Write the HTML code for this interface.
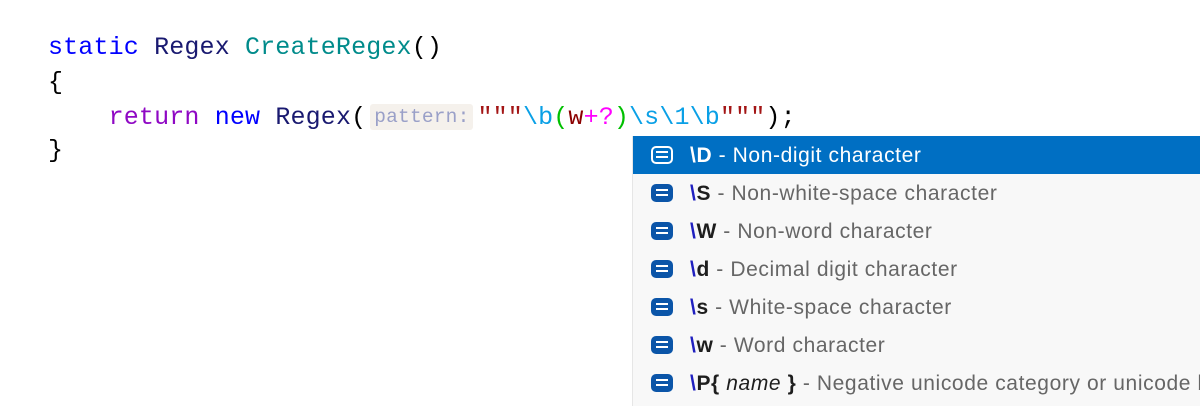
<!DOCTYPE html>
<html><head><style>
body{margin:0;width:1200px;height:400px;background:#fff;overflow:hidden;position:relative;font-family:"Liberation Mono",monospace}
.l{position:absolute;left:48px;font-size:25px;white-space:pre;line-height:34px;color:#000;letter-spacing:0.15px}
.kw{color:#0000ff}.ty{color:#191970}.fn{color:#008b8b}.rt{color:#8f08c4}
.q{color:#a31515}.re{color:#0aa0e6}.g{color:#00c000}.w{color:#8b0000}.m{color:#ff00ff}
.hint{display:inline-block;background:#f5f1ec;color:#9aa0c8;font-size:19.5px;border-radius:3px;padding:0 4px;margin:0 4px 0 4px;line-height:26px;vertical-align:2px;letter-spacing:0.2px}
.pop{position:absolute;left:632px;top:136px;width:570px;height:270px;background:#f8f8f8;border-left:1px solid #e6e6e6;font-family:"Liberation Sans",sans-serif;font-size:21px;letter-spacing:0.6px}
.r{height:38px;line-height:40px;position:relative;padding-left:57px;color:#666;white-space:nowrap}
.r b{color:#1e1e1e}.r .bs{color:#2020c0;font-weight:bold}
.r.sel{background:#006fc3;color:#fff}.r.sel b,.r.sel .bs{color:#fff}
.ic{position:absolute;left:18px;top:10px;width:22px;height:18px;background:#0b55a8;border-radius:5px;box-sizing:border-box}
.ic:before,.ic:after{content:"";position:absolute;left:5px;right:5px;height:2px;background:#fff}
.ic:before{top:5px}.ic:after{top:10px}
.sel .ic{background:#006fc3;border:2px solid #fff}
.sel .ic:before{top:3px;left:3px;right:3px}.sel .ic:after{top:8px;left:3px;right:3px}
</style></head><body>
<div class="l" style="top:31px"><span class="kw">static</span> <span class="ty">Regex</span> <span class="fn">CreateRegex</span>()</div>
<div class="l" style="top:66px">{</div>
<div class="l" style="top:101px">    <span class="rt">return</span> <span class="kw">new</span> <span class="ty">Regex</span>(<span class="hint">pattern:</span><span class="q">"""</span><span class="re">\b</span><span class="g">(</span><span class="w">w</span><span class="m">+?</span><span class="g">)</span><span class="re">\s\1\b</span><span class="q">"""</span>);</div>
<div class="l" style="top:134px">}</div>
<div class="pop">
<div class="r sel"><span class="ic"></span><span class="bs">\</span><b>D</b> - Non-digit character</div>
<div class="r"><span class="ic"></span><span class="bs">\</span><b>S</b> - Non-white-space character</div>
<div class="r"><span class="ic"></span><span class="bs">\</span><b>W</b> - Non-word character</div>
<div class="r"><span class="ic"></span><span class="bs">\</span><b>d</b> - Decimal digit character</div>
<div class="r"><span class="ic"></span><span class="bs">\</span><b>s</b> - White-space character</div>
<div class="r"><span class="ic"></span><span class="bs">\</span><b>w</b> - Word character</div>
<div class="r"><span class="ic"></span><span class="bs">\</span><b>P{</b> <i style="color:#1e1e1e">name</i> <b>}</b> - Negative unicode category or unicode block</div>
</div>
</body></html>
